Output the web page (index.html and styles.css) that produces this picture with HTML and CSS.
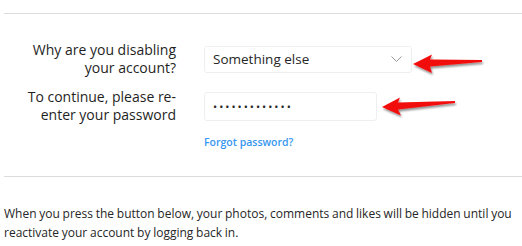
FILE: index.html
```html
<!DOCTYPE html>
<html>
  <head>
    <link rel="stylesheet" href="styles.css">
  </head>
  <body>
    <div class="page">
      <hr class="divider">
      <form class="disable-form">
        <div class="form-row">
          <label class="form-label" for="reason">Why are you disabling your account?</label>
          <div class="form-field">
            <div class="select-box" id="reason">
              <span>Something else</span>
              <svg class="chevron" width="11" height="6" viewBox="0 0 11 6"><path d="M0.5 0.5l5 5 5-5" fill="none" stroke="#999" stroke-width="1"/></svg>
            </div>
          </div>
        </div>
        <div class="form-row">
          <label class="form-label" for="password">To continue, please re-enter your password</label>
          <div class="form-field">
            <div class="password-box" id="password">&bull;&bull;&bull;&bull;&bull;&bull;&bull;&bull;&bull;&bull;&bull;&bull;&bull;</div>
          </div>
        </div>
        <div class="form-row forgot-row">
          <div class="form-label"></div>
          <div class="form-field">
            <a href="#" class="forgot-link">Forgot password?</a>
          </div>
        </div>
      </form>
      <hr class="divider divider-bottom">
      <p class="notice">When you press the button below, your photos, comments and likes will be hidden until you reactivate your account by logging back in.</p>
    </div>
    <!-- annotation arrows drawn over the screenshot -->
    <svg class="arrows" width="522" height="246" viewBox="0 0 522 246">
      <defs>
        <filter id="shadow" x="-20%" y="-50%" width="140%" height="200%">
          <feGaussianBlur in="SourceAlpha" stdDeviation="1.2"/>
          <feOffset dx="1" dy="2" result="blur"/>
          <feComponentTransfer><feFuncA type="linear" slope="0.45"/></feComponentTransfer>
          <feMerge><feMergeNode/><feMergeNode in="SourceGraphic"/></feMerge>
        </filter>
      </defs>
      <polygon filter="url(#shadow)" fill="#f20d0d" points="413,64 432,54.5 430,59.5 482,60 482,62 430,66.5 432,73"/>
      <polygon filter="url(#shadow)" fill="#f20d0d" points="382,107 400,97.5 398,102.5 455,101 455,103 398,109.5 401,115.5"/>
    </svg>
  </body>
</html>
```

FILE: styles.css
```css
body {
  margin: 0;
  background: #fff;
  font-family: "Open Sans", "Noto Sans", sans-serif;
  color: #262626;
}
.page {
  padding-left: 4px;
}
.divider {
  border: 0;
  border-top: 1px solid #dbdbdb;
  margin: 13px 0 0 0;
}
.divider-bottom {
  margin-top: 28px;
}
.disable-form {
  padding-top: 27px;
}
.form-row {
  display: flex;
  align-items: center;
  height: 36px;
  margin-bottom: 11px;
}
.form-label {
  width: 200px;
  box-sizing: border-box;
  padding: 0 28px 0 10px;
  text-align: right;
  font-size: 14px;
  line-height: 18px;
  color: #1f1f1f;
}
.form-field {
  flex: 1;
}
.select-box {
  width: 208px;
  height: 27px;
  box-sizing: border-box;
  border: 1px solid #efefef;
  border-radius: 3px;
  display: flex;
  align-items: center;
  justify-content: space-between;
  padding: 0 9px 0 8px;
  font-size: 13.5px;
}
.password-box {
  width: 173px;
  height: 29px;
  box-sizing: border-box;
  border: 1px solid #efefef;
  border-radius: 3px;
  padding: 0 8px;
  font-size: 11px;
  line-height: 27px;
  letter-spacing: 2px;
}
.forgot-row {
  height: 16px;
  margin: -3px 0 0 0;
}
.forgot-link {
  color: #3897f0;
  font-size: 10.5px;
  font-weight: 600;
  text-decoration: none;
}
.notice {
  font-size: 12px;
  word-spacing: -0.4px;
  line-height: 19px;
  margin: 27px 0 0 0;
}
.arrows {
  position: absolute;
  top: 0;
  left: 0;
  pointer-events: none;
}
```
